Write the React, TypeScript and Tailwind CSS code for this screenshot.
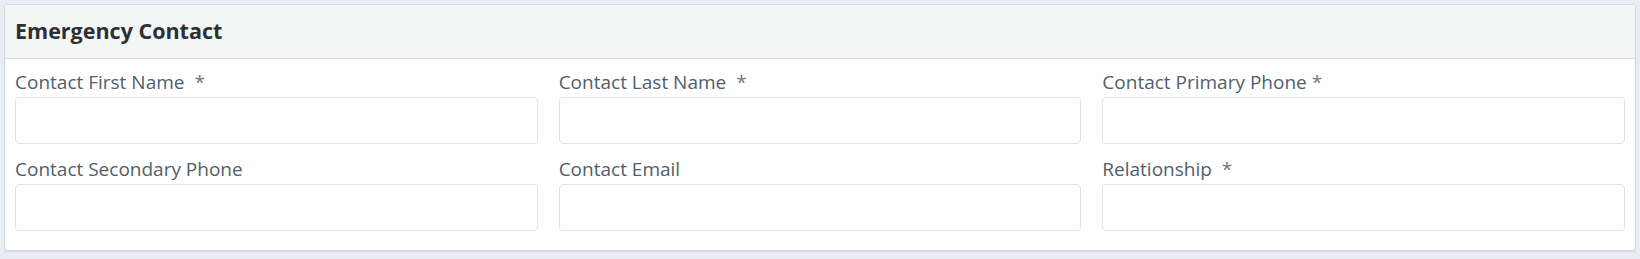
import React from 'react';

type Field = { label: string; required?: boolean; tight?: boolean };

const fields: Field[] = [
  { label: 'Contact First Name', required: true },
  { label: 'Contact Last Name', required: true },
  { label: 'Contact Primary Phone', required: true, tight: true },
  { label: 'Contact Secondary Phone' },
  { label: 'Contact Email' },
  { label: 'Relationship', required: true },
];

function FormField({ label, required, tight }: Field) {
  return (
    <div className="flex flex-col">
      <label className="h-[22px] mb-[4px] text-[19px] leading-[22px] font-medium text-[#525e6a] whitespace-nowrap">
        {label}
        {required && (
          <span className={`${tight ? 'ml-[5px]' : 'ml-[10px]'} font-normal text-[#6d7782]`}>*</span>
        )}
      </label>
      <input
        type="text"
        className="h-[47px] w-full rounded-[4px] border border-[#e1e3e5] bg-white px-3 outline-none"
      />
    </div>
  );
}

export default function App() {
  return (
    <div className="min-h-screen bg-[#e9ecf5] p-[4px] font-['Open_Sans',sans-serif]">
      <div className="rounded-[3px] border border-[#d3d8e7] bg-white shadow-[0_1px_1px_rgba(60,70,100,0.12)]">
        {/* Header */}
        <div className="h-[54px] flex items-center px-[10px] bg-[#f4f6f6] border-b border-[#d3d8e7] rounded-t-[3px]">
          <h2 className="text-[21.5px] font-bold text-[#2c3034]">Emergency Contact</h2>
        </div>

        {/* Body */}
        <div className="grid grid-cols-3 gap-x-[21px] gap-y-[14px] px-[10px] pt-[12px] pb-[19px]">
          {fields.map((f) => (
            <FormField key={f.label} {...f} />
          ))}
        </div>
      </div>
    </div>
  );
}
